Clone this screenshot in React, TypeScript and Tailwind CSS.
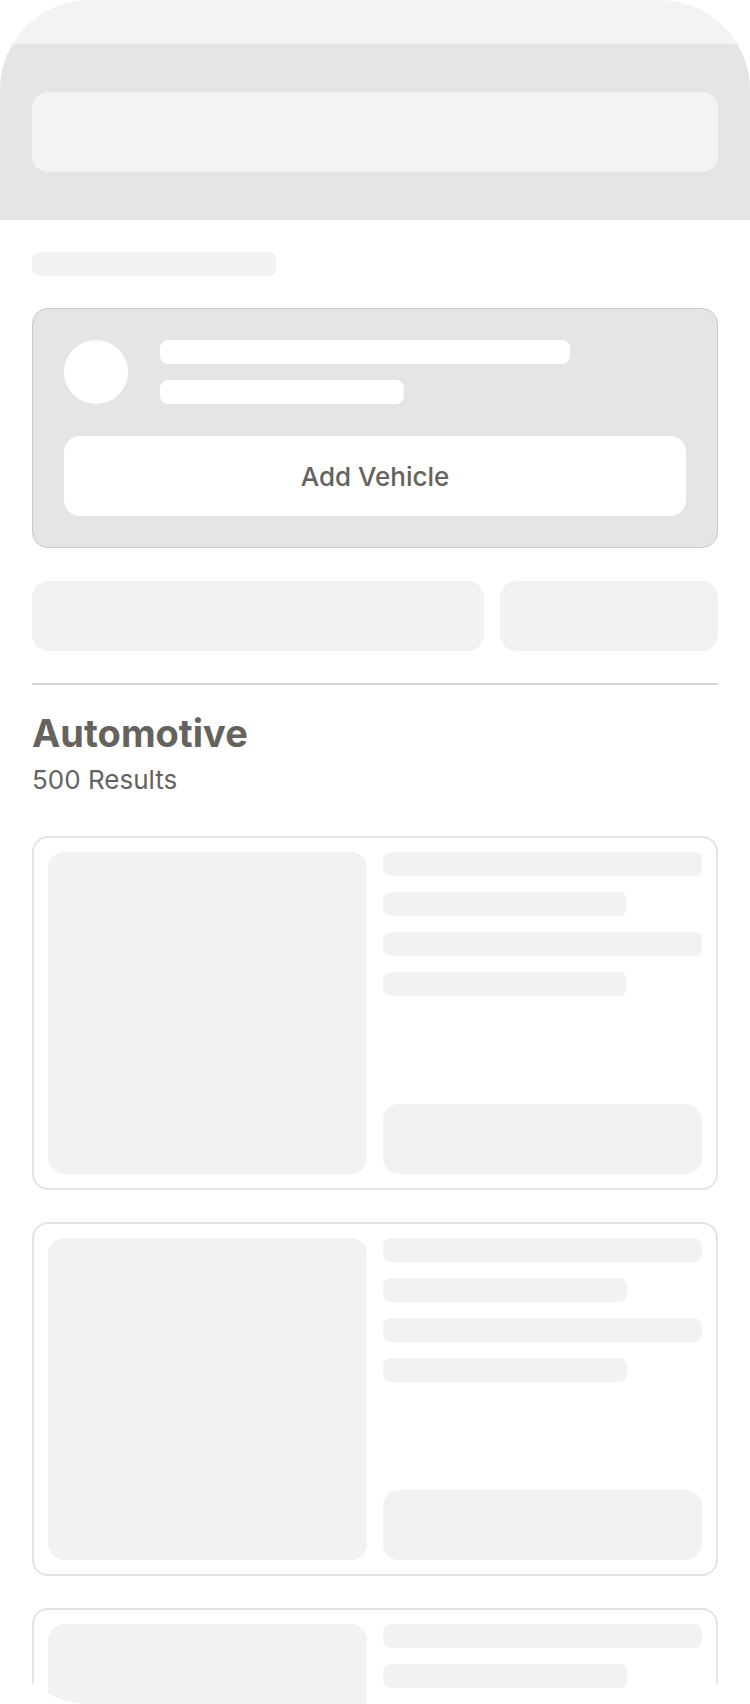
import React from "react";

function ResultCard() {
  return (
    <div className="flex gap-4 rounded-2xl border-2 border-[#e4e4e4] p-[14px]">
      <div className="h-[322px] w-[319px] shrink-0 rounded-2xl bg-[#f2f2f2]" />
      <div className="flex flex-1 flex-col">
        <div className="flex flex-col gap-4">
          <div className="h-6 w-full rounded-lg bg-[#f2f2f2]" />
          <div className="h-6 w-[244px] rounded-lg bg-[#f2f2f2]" />
          <div className="h-6 w-full rounded-lg bg-[#f2f2f2]" />
          <div className="h-6 w-[244px] rounded-lg bg-[#f2f2f2]" />
        </div>
        <div className="mt-auto h-[70px] w-full rounded-2xl bg-[#f2f2f2]" />
      </div>
    </div>
  );
}

export default function App() {
  return (
    <div className="h-[1704px] w-[750px] overflow-hidden bg-white" style={{ fontFamily: "Inter, 'Noto Sans', sans-serif" }}>
      <div className="h-full w-full overflow-hidden rounded-[90px] bg-white">
        {/* header */}
        <div className="h-[44px] bg-[#f3f3f3]" />
        <div className="h-[176px] bg-[#e6e5e3] px-8 pt-[48px]">
          <div className="h-20 w-full rounded-2xl bg-[#f3f3f3]" />
        </div>

        <div className="px-8">
          <div className="mt-8 h-6 w-[244px] rounded-lg bg-[#f2f2f2]" />

          <div className="mt-8 rounded-2xl border border-[#c9c9c9] bg-[#e6e5e3] p-[31px]">
            <div className="flex items-start gap-8">
              <div className="h-16 w-16 shrink-0 rounded-full bg-white" />
              <div className="flex flex-col gap-4">
                <div className="h-6 w-[410px] rounded-lg bg-white" />
                <div className="h-6 w-[244px] rounded-lg bg-white" />
              </div>
            </div>
            <button className="mt-8 flex h-20 w-full items-center justify-center rounded-2xl bg-white text-[26px] font-medium text-[#66625d]">
              Add Vehicle
            </button>
          </div>

          <div className="mt-[33px] flex gap-4">
            <div className="h-[70px] w-[452px] rounded-2xl bg-[#f2f2f2]" />
            <div className="h-[70px] flex-1 rounded-2xl bg-[#f2f2f2]" />
          </div>

          <div className="mt-8 h-[2px] w-full bg-[#d6d6d6]" />

          <h1 className="mt-[25px] text-[38px] font-bold leading-[46px] text-[#66625d]">Automotive</h1>
          <p className="mt-[8px] text-[26px] leading-[31px] text-[#66625d]">500 Results</p>

          <div className="mt-[41px] flex flex-col gap-8">
            <ResultCard />
            <ResultCard />
            <ResultCard />
          </div>
        </div>
      </div>
    </div>
  );
}
